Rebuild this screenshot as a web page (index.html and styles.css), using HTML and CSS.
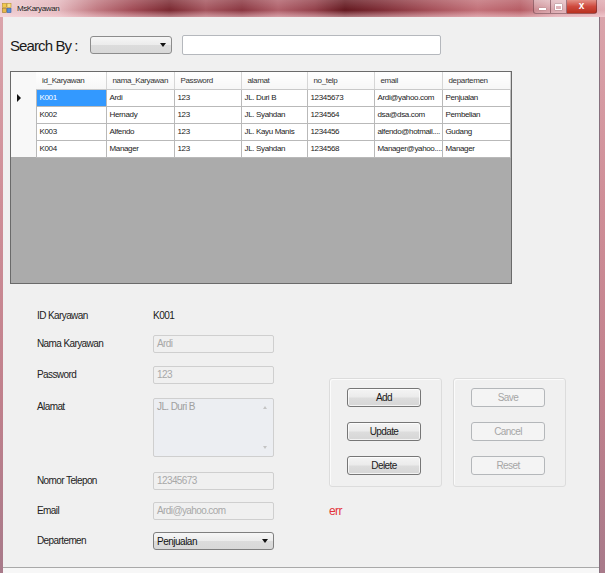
FILE: index.html
```html
<!DOCTYPE html>
<html>
<head>
<meta charset="utf-8">
<title>MsKaryawan</title>
<link rel="stylesheet" href="styles.css">
</head>
<body>
<div class="window">
  <div class="titlebar">
    <svg class="app-icon" width="10" height="11" viewBox="0 0 10 11">
      <rect x="0.5" y="0.5" width="4" height="4" fill="#f2c94c" stroke="#b8912a" stroke-width="0.6"/>
      <rect x="5" y="0.5" width="4" height="4" fill="#f7e08a" stroke="#b8912a" stroke-width="0.6"/>
      <rect x="0.5" y="5.5" width="4" height="4" fill="#e8b84a" stroke="#a07c22" stroke-width="0.6"/>
      <rect x="5" y="5.5" width="4" height="4" fill="#5b8fd6" stroke="#2f5ea8" stroke-width="0.6"/>
    </svg>
    <span class="title">MsKaryawan</span>
    <div class="caption-btns">
      <span class="cbtn cmin"><span class="min-glyph"></span></span>
      <span class="cbtn cmax"><span class="max-glyph"></span></span>
      <span class="cbtn cclose">x</span>
    </div>
  </div>
  <div class="frame">
    <div class="client">
      <div class="search">
        <span class="search-label">Search By :</span>
        <div class="combo search-combo"><span class="combo-text"></span><span class="arrow"></span></div>
        <div class="search-box"></div>
      </div>

      <div class="grid">
        <table class="dgv">
          <colgroup>
            <col class="c-rh"><col class="c1"><col class="c2"><col class="c3"><col class="c4"><col class="c5"><col class="c6"><col class="c7">
          </colgroup>
          <thead>
            <tr>
              <th class="rh"></th>
              <th>id_Karyawan</th><th>nama_Karyawan</th><th>Password</th><th>alamat</th><th>no_telp</th><th>email</th><th>departemen</th>
            </tr>
          </thead>
          <tbody>
            <tr>
              <td class="rh"><span class="cur"></span></td>
              <td class="sel">K001</td><td>Ardi</td><td>123</td><td>JL. Duri B</td><td>12345673</td><td>Ardi@yahoo.com</td><td>Penjualan</td>
            </tr>
            <tr>
              <td class="rh"></td>
              <td>K002</td><td>Hernady</td><td>123</td><td>JL. Syahdan</td><td>1234564</td><td>dsa@dsa.com</td><td>Pembelian</td>
            </tr>
            <tr>
              <td class="rh"></td>
              <td>K003</td><td>Alfendo</td><td>123</td><td>JL. Kayu Manis</td><td>1234456</td><td>alfendo@hotmail....</td><td>Gudang</td>
            </tr>
            <tr>
              <td class="rh"></td>
              <td>K004</td><td>Manager</td><td>123</td><td>JL. Syahdan</td><td>1234568</td><td>Manager@yahoo....</td><td>Manager</td>
            </tr>
          </tbody>
        </table>
      </div>

      <div class="form">
        <span class="lbl r1">ID Karyawan</span>
        <span class="val r1">K001</span>

        <span class="lbl r2">Nama Karyawan</span>
        <div class="tb r2">Ardi</div>

        <span class="lbl r3">Password</span>
        <div class="tb r3">123</div>

        <span class="lbl r4">Alamat</span>
        <div class="ta r4">JL. Duri B<span class="sb-up"></span><span class="sb-down"></span></div>

        <span class="lbl r5">Nomor Telepon</span>
        <div class="tb r5">12345673</div>

        <span class="lbl r6">Email</span>
        <div class="tb r6">Ardi@yahoo.com</div>
        <span class="err r6">err</span>

        <span class="lbl r7">Departemen</span>
        <div class="combo dept r7"><span class="combo-text">Penjualan</span><span class="arrow"></span></div>

        <div class="group g1">
          <button class="btn">Add</button>
          <button class="btn">Update</button>
          <button class="btn">Delete</button>
        </div>
        <div class="group g2">
          <button class="btn" disabled>Save</button>
          <button class="btn" disabled>Cancel</button>
          <button class="btn" disabled>Reset</button>
        </div>
      </div>

      <div class="statusbar"></div>
    </div>
  </div>
</div>
</body>
</html>
```
FILE: styles.css
```css
* { box-sizing: border-box; }

html, body {
  margin: 0;
  padding: 0;
}

body {
  width: 605px;
  height: 573px;
  overflow: hidden;
  font-family: "Liberation Sans", Arial, sans-serif;
  color: #1e1e1e;
}

.window {
  width: 605px;
  height: 573px;
  display: flex;
  flex-direction: column;
  background: linear-gradient(180deg, #dba6ad 0%, #cf8e97 35%, #c0808c 70%, #a87a8a 100%);
}

/* ---------- title bar ---------- */
.titlebar {
  height: 17px;
  flex: none;
  display: flex;
  align-items: center;
  background:
    linear-gradient(180deg, rgba(255,255,255,0.18) 0%, rgba(255,255,255,0) 60%, rgba(255,225,230,0.5) 100%),
    linear-gradient(90deg, #ecccd0 0%, #e2b4ba 10%, #c07880 16%, #a04a54 22%, #7a2830 28%, #a4545d 34%, #8a3640 40%, #b0606a 46%, #93404a 52%, #64181f 57%, #7e2c35 63%, #a44e57 71%, #c27078 79%, #b65c64 86%, #d69ca3 92%, #e0aab1 100%);
}

.app-icon {
  margin-left: 2px;
  flex: none;
}

.title {
  margin-left: 5px;
  font-size: 8px;
  letter-spacing: -0.4px;
  color: #222;
  text-shadow: 0 0 3px rgba(255,255,255,0.7);
}

.caption-btns {
  margin-left: auto;
  margin-right: 8px;
  align-self: flex-start;
  display: flex;
  height: 14px;
}

.cbtn {
  height: 14px;
  display: flex;
  align-items: center;
  justify-content: center;
  border: 1px solid rgba(90,40,50,0.5);
  border-top: none;
  background: linear-gradient(180deg, rgba(255,255,255,0.35), rgba(255,255,255,0.1));
}

.cmin { width: 18px; border-radius: 0 0 0 3px; }
.cmax { width: 16px; border-left: none; }
.cclose {
  width: 30px;
  border-left: none;
  border-radius: 0 0 3px 0;
  background: linear-gradient(180deg, #e39086 0%, #cf4a3e 50%, #b8301f 100%);
  color: #fff;
  font-size: 10px;
  font-weight: bold;
  line-height: 1;
  padding-bottom: 2px;
}

.min-glyph {
  width: 7px;
  height: 2px;
  margin-top: 5px;
  background: #fff;
  box-shadow: 0 0 1px #555;
}

.max-glyph {
  width: 7px;
  height: 6px;
  border: 1px solid #fff;
  border-top-width: 2px;
  box-shadow: 0 0 1px #555;
}

/* ---------- frame & client ---------- */
.frame {
  flex: 1;
  display: flex;
  padding: 0 5px 0 3px;
}

.client {
  flex: 1;
  display: flex;
  flex-direction: column;
  background: #f0f0f0;
  border-right: 1px solid #86707e;
}

/* ---------- search row ---------- */
.search {
  margin-top: 18px;
  height: 20px;
  display: flex;
  align-items: center;
  padding-left: 7px;
}

.search-label {
  width: 80px;
  flex: none;
  white-space: nowrap;
  font-size: 15px;
  letter-spacing: -0.9px;
  color: #1a1a1a;
}

.combo {
  height: 18px;
  display: flex;
  align-items: center;
  border: 1px solid #8c8c8c;
  border-radius: 3px;
  background: linear-gradient(180deg, #f6f6f6 0%, #ececec 48%, #dcdcdc 52%, #d8d8d8 100%);
  padding: 0 5px 0 3px;
}

.combo-text {
  flex: 1;
  font-size: 10px;
  letter-spacing: -0.5px;
  color: #111;
}

.arrow {
  width: 0;
  height: 0;
  border-left: 3px solid transparent;
  border-right: 3px solid transparent;
  border-top: 4px solid #111;
}

.search-combo {
  width: 82px;
  flex: none;
}

.search-box {
  width: 259px;
  height: 20px;
  margin-left: 10px;
  background: #fff;
  border: 1px solid #b5b8bd;
  border-radius: 2px;
}

/* ---------- data grid ---------- */
.grid {
  margin-top: 16px;
  margin-left: 7px;
  width: 502px;
  height: 213px;
  border: 1px solid #6a6a6a;
  background: #ababab;
}

.dgv {
  border-collapse: collapse;
  table-layout: fixed;
  width: 499px;
  font-size: 8px;
  letter-spacing: -0.35px;
  color: #222;
}

.c-rh { width: 25px; }
.c1 { width: 70px; }
.c2 { width: 68px; }
.c3 { width: 67px; }
.c4 { width: 66px; }
.c5 { width: 67px; }
.c6 { width: 68px; }
.c7 { width: 68px; }

.dgv th {
  height: 17px;
  padding: 0 0 0 6px;
  text-align: left;
  font-weight: normal;
  color: #333;
  background: linear-gradient(180deg, #ffffff, #f6f6f6);
  border-right: 1px solid #d6d6d6;
  border-bottom: 1px solid #c9c9c9;
  white-space: nowrap;
  overflow: hidden;
}

.dgv td {
  height: 17px;
  padding: 0 0 0 3px;
  background: #fff;
  border: 1px solid #b9b9b9;
  white-space: nowrap;
  overflow: hidden;
}

.dgv .rh {
  background: #f8f8f8;
  border: none;
  padding: 0 0 0 6px;
}

.dgv td.sel {
  background: #3399ff;
  color: #fff;
}

.cur {
  display: block;
  width: 0;
  height: 0;
  border-left: 4px solid #111;
  border-top: 4px solid transparent;
  border-bottom: 4px solid transparent;
}

/* ---------- form ---------- */
.form {
  margin-top: 23px;
  margin-left: 34px;
  display: grid;
  grid-template-columns: 116px 121px 55px 113px 11px 113px;
  grid-template-rows: 28px 31px 32px 74px 30px 30px 18px;
  align-items: start;
}

.r1 { grid-row: 1; }
.r2 { grid-row: 2; }
.r3 { grid-row: 3; }
.r4 { grid-row: 4; }
.r5 { grid-row: 5; }
.r6 { grid-row: 6; }
.r7 { grid-row: 7; }

.lbl {
  grid-column: 1;
  font-size: 10px;
  letter-spacing: -0.6px;
  line-height: 18px;
  color: #222;
  white-space: nowrap;
}

.val {
  grid-column: 2;
  font-size: 10px;
  letter-spacing: -0.5px;
  line-height: 18px;
  color: #1a1a1a;
}

.tb {
  grid-column: 2;
  height: 18px;
  border: 1px solid #cfcfcf;
  border-radius: 2px;
  background: #f0f0f0;
  font-size: 10px;
  letter-spacing: -0.6px;
  line-height: 16px;
  padding-left: 3px;
  color: #a8a8a8;
  white-space: nowrap;
}

.ta {
  grid-column: 2;
  height: 59px;
  position: relative;
  border: 1px solid #cfcfcf;
  border-radius: 2px;
  background: #eceef2;
  font-size: 10px;
  letter-spacing: -0.6px;
  line-height: 16px;
  padding-left: 3px;
  color: #a0a0a0;
}

.sb-up, .sb-down {
  position: absolute;
  right: 6px;
  width: 0;
  height: 0;
  border-left: 2px solid transparent;
  border-right: 2px solid transparent;
}
.sb-up { top: 7px; border-bottom: 3px solid #c4c4c4; }
.sb-down { bottom: 7px; border-top: 3px solid #c4c4c4; }

.err {
  grid-column: 4;
  font-size: 12px;
  letter-spacing: -0.6px;
  line-height: 18px;
  color: #e3333b;
}

.dept {
  grid-column: 2;
  height: 18px;
  border-color: #7f7f7f;
}

.group {
  grid-row: 3 / span 3;
  margin-top: 12px;
  height: 109px;
  border: 1px solid #dcdcdc;
  border-radius: 3px;
  box-shadow: inset 1px 1px 0 #fbfbfb;
  display: flex;
  flex-direction: column;
  align-items: flex-start;
  padding: 9px 0 0 17px;
  gap: 15px;
}

.g1 { grid-column: 4; }
.g2 { grid-column: 6; }

.btn {
  width: 74px;
  height: 19px;
  margin: 0;
  padding: 0;
  border: 1px solid #767676;
  border-radius: 3px;
  background: linear-gradient(180deg, #f4f4f4 0%, #ebebeb 48%, #dddddd 52%, #d6d6d6 100%);
  font-family: "Liberation Sans", Arial, sans-serif;
  font-size: 10px;
  letter-spacing: -0.6px;
  color: #1a1a1a;
  box-shadow: inset 0 0 0 1px rgba(255,255,255,0.7);
}

.btn:disabled {
  border-color: #b4b7ba;
  background: #f4f4f4;
  color: #a6a6a6;
  box-shadow: none;
}

/* ---------- bottom strip ---------- */
.statusbar {
  margin-top: auto;
  height: 6px;
  border-top: 1px solid #a9a9a9;
  background: #f7f7f7;
}
```
